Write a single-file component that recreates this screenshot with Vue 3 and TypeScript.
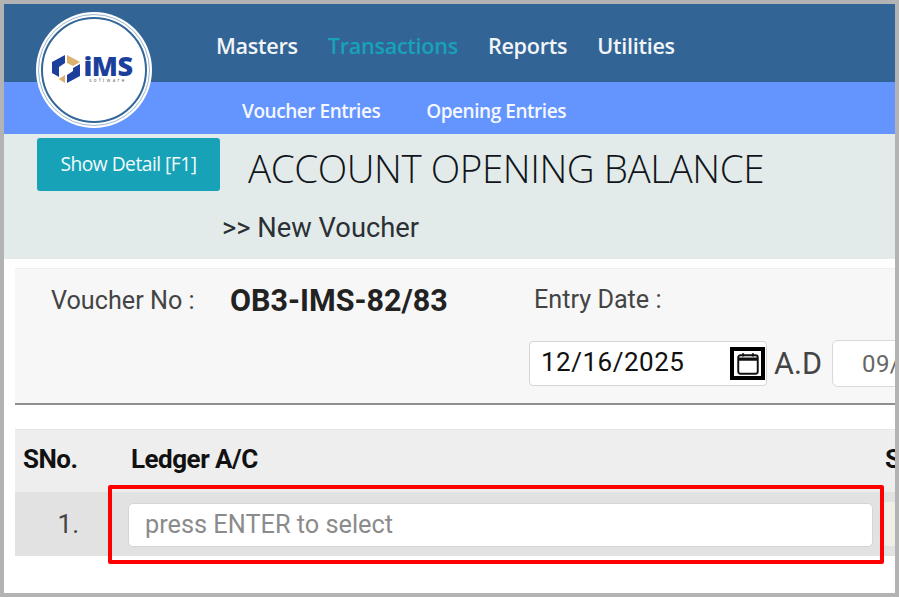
<script setup lang="ts">
import { ref } from 'vue'

const mainMenu = ['Masters', 'Transactions', 'Reports', 'Utilities']
const subMenu = ['Voucher Entries', 'Opening Entries']
const activeMenu = ref('Transactions')
const entryDate = ref('12/16/2025')
const miti = ref('09/01/2082')
</script>

<template>
  <div class="frame">
    <div class="logo">
      <div class="logo-outer">
        <div class="logo-ring">
          <svg class="logo-mark" viewBox="0 0 30 30" width="30" height="30">
            <polygon points="14,1 14,9 8,13 8,23 1,19 1,8" fill="#1d3f9c" />
            <polygon points="16,1 29,8 22,12 16,9" fill="#dcb06e" />
            <polygon points="29,10 29,22 16,29 16,21 22,17 22,14" fill="#1d3f9c" />
            <polygon points="1,21 8,25 14,21 14,29" fill="#dcb06e" />
          </svg>
          <div class="logo-text">
            <span class="logo-name">iMS</span>
            <span class="logo-sub">software</span>
          </div>
        </div>
      </div>
    </div>

    <nav class="main-nav">
      <a v-for="item in mainMenu" :key="item" :class="{ active: item === activeMenu }">{{ item }}</a>
    </nav>
    <nav class="sub-nav">
      <a v-for="item in subMenu" :key="item">{{ item }}</a>
    </nav>

    <section class="title-band">
      <div class="title-row">
        <button class="detail-btn">Show Detail [F1]</button>
        <h1>ACCOUNT OPENING BALANCE</h1>
      </div>
      <div class="crumb">&gt;&gt; New Voucher</div>
    </section>

    <section class="voucher-panel">
      <div class="voucher-col">
        <span class="voucher-label">Voucher No :</span>
        <span class="voucher-no">OB3-IMS-82/83</span>
      </div>
      <div class="date-col">
        <span class="entry-label">Entry Date :</span>
        <div class="date-row">
          <div class="date-input">
            <input v-model="entryDate" />
            <span class="cal-box">
              <svg viewBox="0 0 24 24" width="26" height="26" fill="none" stroke="#111" stroke-width="1.8">
                <rect x="3" y="4" width="18" height="17" rx="2" />
                <path d="M3 7.5h18" stroke-width="3" />
                <path d="M7.5 2v3M16.5 2v3" />
              </svg>
            </span>
          </div>
          <span class="ad">A.D</span>
          <input class="miti-input" v-model="miti" />
        </div>
      </div>
    </section>

    <section class="entry-table">
      <div class="thead">
        <span class="th-sno">SNo.</span>
        <span class="th-ledger">Ledger A/C</span>
        <span class="th-next">S</span>
      </div>
      <div class="tbody">
        <span class="td-sno">1.</span>
        <div class="td-ledger">
          <input placeholder="press ENTER to select" />
        </div>
        <div class="td-next"></div>
      </div>
    </section>

    <div class="highlight"></div>
  </div>
</template>

<style>
html, body {
  margin: 0;
  background: #fff;
}
</style>

<style scoped>
.frame {
  position: relative;
  width: 899px;
  height: 597px;
  box-sizing: border-box;
  border: 4px solid #b3b3b3;
  background: #fff;
  overflow: hidden;
  font-family: Roboto, "Liberation Sans", sans-serif;
}

.logo {
  position: absolute;
  left: 32px;
  top: 8px;
  width: 116px;
  height: 116px;
  border-radius: 50%;
  background: #fff;
  display: flex;
  align-items: center;
  justify-content: center;
}

.logo-outer {
  width: 112px;
  height: 112px;
  box-sizing: border-box;
  border: 1px solid #9db7cf;
  border-radius: 50%;
  display: flex;
  align-items: center;
  justify-content: center;
}

.logo-ring {
  width: 106px;
  height: 106px;
  box-sizing: border-box;
  border: 2.5px solid #336699;
  border-radius: 50%;
  background: #fff;
  display: flex;
  align-items: center;
  justify-content: center;
  gap: 3px;
  padding: 0 5px 2px 0;
}

.logo-text {
  display: flex;
  flex-direction: column;
  align-items: center;
}

.logo-name {
  font-family: "Open Sans", sans-serif;
  font-weight: 800;
  font-size: 27px;
  line-height: 22px;
  letter-spacing: -0.5px;
  color: #1d3f9c;
}

.logo-sub {
  font-family: "Open Sans", sans-serif;
  font-size: 4.5px;
  line-height: 6px;
  letter-spacing: 2.4px;
  color: #555;
}

.main-nav {
  height: 78px;
  background: #336496;
  display: flex;
  align-items: center;
  padding-left: 212px;
  gap: 30px;
  font-family: "Open Sans", sans-serif;
  font-weight: 600;
  font-size: 21.6px;
  letter-spacing: -0.28px;
  color: #f1f5f8;
  box-sizing: border-box;
  padding-top: 5px;
}

.main-nav .active {
  color: #17a2b8;
}

.sub-nav {
  height: 52px;
  background: #6495ff;
  display: flex;
  align-items: center;
  padding-left: 238px;
  gap: 46px;
  font-family: "Open Sans", sans-serif;
  font-weight: 600;
  font-size: 19px;
  letter-spacing: -0.45px;
  color: #f5f8ff;
  box-sizing: border-box;
  padding-top: 6px;
}

.title-band {
  height: 125px;
  box-sizing: border-box;
  background: #e3ebea;
  padding: 4px 0 0 33px;
}

.title-row {
  display: flex;
  align-items: flex-start;
  gap: 28px;
}

.detail-btn {
  width: 183px;
  height: 53px;
  border: none;
  border-radius: 3px;
  background: #17a2b8;
  color: #f2fbfc;
  font-family: "Open Sans", sans-serif;
  font-weight: 500;
  font-size: 19.2px;
  letter-spacing: -0.5px;
  padding: 0 0 2px;
}

h1 {
  margin: 0;
  padding-top: 2px;
  font-family: "Open Sans", sans-serif;
  font-weight: 300;
  font-size: 38.6px;
  line-height: 56px;
  letter-spacing: -0.45px;
  color: #10151a;
}

.crumb {
  margin: 15px 0 0 185px;
  font-size: 27.3px;
  line-height: 34px;
  color: #2b3035;
}

.voucher-panel {
  margin: 9px 0 0 11px;
  height: 137px;
  box-sizing: border-box;
  background: #f7f7f7;
  border-top: 1px solid #eee;
  border-bottom: 2px solid #8f8f8f;
  display: flex;
  white-space: nowrap;
}

.voucher-col {
  width: 514px;
  flex-shrink: 0;
  padding: 15px 0 0 36px;
  box-sizing: border-box;
  display: flex;
  align-items: flex-start;
}

.voucher-label {
  width: 179px;
  font-size: 25.2px;
  line-height: 34px;
  color: #444;
}

.voucher-no {
  font-size: 30.5px;
  font-weight: 700;
  line-height: 34px;
  color: #222;
}

.date-col {
  padding-top: 15px;
  display: flex;
  flex-direction: column;
}

.entry-label {
  margin-left: 5px;
  font-size: 25.2px;
  line-height: 32px;
  color: #444;
}

.date-row {
  margin-top: 24px;
  display: flex;
  align-items: center;
}

.date-input {
  width: 238px;
  height: 45px;
  box-sizing: border-box;
  border: 1px solid #d5d5d5;
  border-radius: 4px;
  background: #fff;
  display: flex;
  align-items: center;
  overflow: hidden;
}

.date-input input {
  flex: 1;
  min-width: 0;
  border: none;
  outline: none;
  background: transparent;
  padding: 0 0 3px 11px;
  font-family: Roboto, sans-serif;
  font-size: 26px;
  letter-spacing: 0.5px;
  color: #111;
}

.cal-box {
  width: 35px;
  height: 33px;
  box-sizing: border-box;
  border: 4px solid #000;
  margin-right: 1px;
  display: flex;
  align-items: center;
  justify-content: center;
  flex-shrink: 0;
  overflow: hidden;
}

.ad {
  margin-left: 7px;
  width: 58px;
  font-size: 30.5px;
  color: #444;
  white-space: nowrap;
}

.miti-input {
  width: 200px;
  height: 47px;
  box-sizing: border-box;
  border: 1px solid #d9d9d9;
  border-radius: 6px;
  background: #fff;
  padding: 0 0 0 29px;
  font-family: Roboto, sans-serif;
  font-size: 24px;
  letter-spacing: 0.4px;
  color: #666;
  flex-shrink: 0;
}

.entry-table {
  margin: 24px 0 0 11px;
}

.thead {
  height: 63px;
  box-sizing: border-box;
  background: #eee;
  border-top: 1px solid #e6e6e6;
  display: grid;
  grid-template-columns: 116px 754px 40px;
  align-items: center;
  font-size: 26px;
  font-weight: 700;
  letter-spacing: -0.5px;
  color: #111;
  white-space: nowrap;
  overflow: hidden;
  padding-bottom: 4px;
}

.th-sno {
  padding-left: 8px;
}

.tbody {
  height: 64px;
  background: #e2e2e2;
  display: grid;
  grid-template-columns: 108px 758px 40px;
  align-items: center;
}

.td-sno {
  text-align: right;
  padding-right: 44px;
  font-size: 26px;
  color: #444;
}

.td-ledger {
  height: 100%;
  box-sizing: border-box;
  padding: 1px 0 0 5px;
  display: flex;
  align-items: center;
}

.td-ledger input {
  width: 745px;
  height: 44px;
  box-sizing: border-box;
  border: 1px solid #d5d5d5;
  border-radius: 5px;
  background: #fff;
  padding: 0 0 0 16px;
  font-family: Roboto, sans-serif;
  font-size: 25.3px;
  color: #333;
}

.td-ledger input::placeholder {
  color: #8b8b8b;
  opacity: 1;
}

.td-next {
  height: 44px;
  background: #efefe8;
  border-radius: 5px 0 0 5px;
}

.highlight {
  position: absolute;
  left: 104px;
  top: 481px;
  width: 776px;
  height: 79px;
  box-sizing: border-box;
  border: 4px solid #f00;
  border-radius: 2px;
  pointer-events: none;
}
</style>
